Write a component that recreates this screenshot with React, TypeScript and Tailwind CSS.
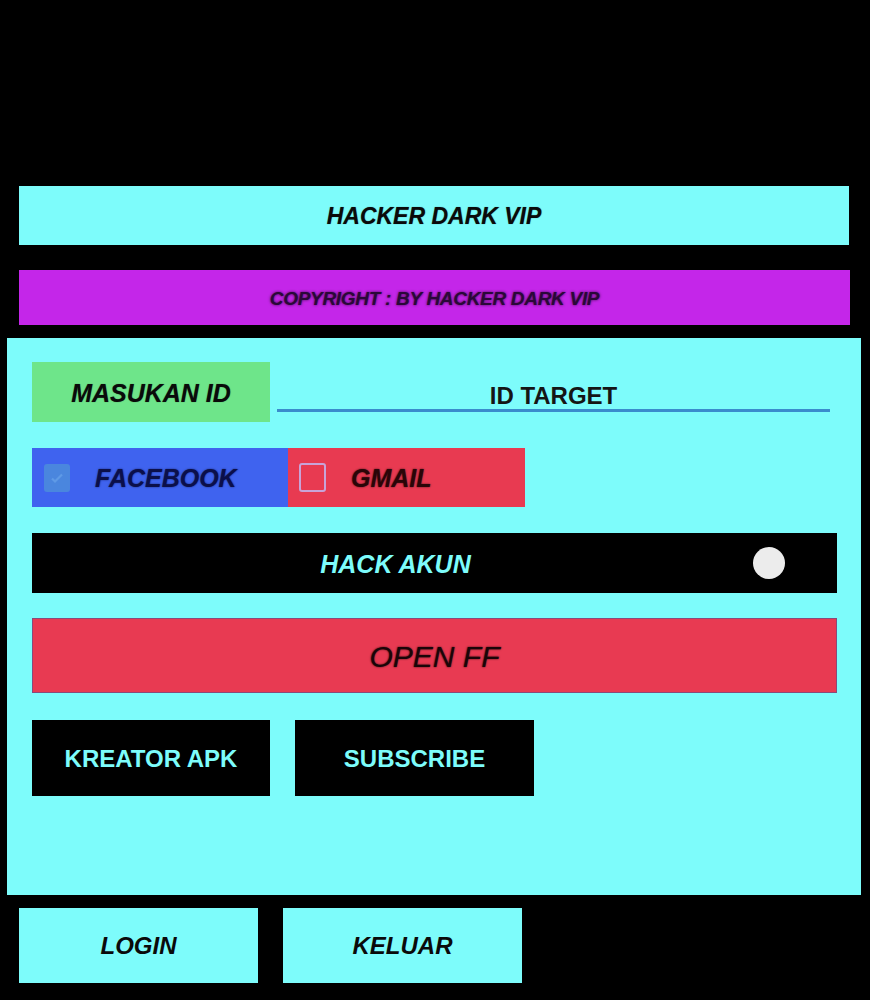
import React from "react";

const font = "font-['Liberation_Sans','Arial',sans-serif]";

export default function App() {
  return (
    <div className={`bg-black w-[870px] h-[1000px] pt-[186px] ${font}`}>
      <div className="ml-[19px] w-[830px] h-[59px] bg-[#7dfcfb] flex items-center justify-center pt-[2px]">
        <span className="text-[23px] font-bold italic text-[#0a0a0a] [text-shadow:0_0_1px_rgba(0,0,0,0.5)]">
          HACKER DARK VIP
        </span>
      </div>

      <div className="ml-[19px] mt-[25px] w-[831px] h-[55px] bg-[#c426e9] flex items-center justify-center pt-[3px]">
        <span className="text-[19px] font-bold italic tracking-[-0.3px] text-[#2a0838] [text-shadow:0_0_3px_rgba(0,0,0,0.7)]">
          COPYRIGHT : BY HACKER DARK VIP
        </span>
      </div>

      <div className="ml-[7px] mt-[13px] w-[854px] h-[557px] bg-[#7dfcfb] pl-[25px] pt-[24px]">
        <div className="flex items-start h-[60px]">
          <div className="w-[238px] h-[60px] bg-[#6ee58a] flex items-center justify-center pt-[3px]">
            <span className="text-[25px] font-bold italic text-[#0a0a0a] [text-shadow:0_0_1px_rgba(0,0,0,0.5)]">
              MASUKAN ID
            </span>
          </div>
          <div className="ml-[7px] w-[553px] h-[50px] border-b-[3px] border-[#3a8ccc] flex items-end justify-center pb-[0px]">
            <span className="text-[24px] font-bold text-[#151515] leading-[26px]">ID TARGET</span>
          </div>
        </div>

        <div className="mt-[26px] flex h-[59px]">
          <div className="w-[256px] h-[59px] bg-[#3f63ef] flex items-center">
            <div className="ml-[12px] w-[26px] h-[28px] rounded-[3px] bg-[#4a86de] flex items-center justify-center">
              <svg width="16" height="16" viewBox="0 0 16 16">
                <path d="M3 8.5l3 3 7-7" fill="none" stroke="#5f9ae6" strokeWidth="2.2" />
              </svg>
            </div>
            <span className="ml-[25px] pt-[3px] text-[25px] font-bold italic text-[#0b0f4a] [text-shadow:0_0_2px_rgba(0,0,30,0.6)]">
              FACEBOOK
            </span>
          </div>
          <div className="w-[237px] h-[59px] bg-[#e83a51] flex items-center">
            <div className="ml-[11px] w-[27px] h-[29px] rounded-[3px] border-[2px] border-[#c8a3d8]" />
            <span className="ml-[25px] pt-[3px] text-[25px] font-bold italic text-[#2a0508] [text-shadow:0_0_2px_rgba(0,0,0,0.7)]">
              GMAIL
            </span>
          </div>
        </div>

        <div className="mt-[26px] w-[805px] h-[60px] bg-black flex items-center">
          <div className="flex-1 flex justify-center pl-[6px] pt-[4px]">
            <span className="text-[25px] font-bold italic text-[#7dfcfb]">HACK AKUN</span>
          </div>
          <div className="w-[32px] h-[32px] rounded-full bg-[#ececec] mr-[52px]" />
        </div>

        <div className="mt-[25px] w-[805px] h-[75px] bg-[#e83a52] border border-[#8a4a7a] flex items-center justify-center pt-[2px]">
          <span className="text-[30px] italic text-[#1a0508] [text-shadow:0_0_2px_rgba(0,0,0,0.8)]">
            OPEN FF
          </span>
        </div>

        <div className="mt-[27px] flex gap-[25px]">
          <div className="w-[238px] h-[76px] bg-black flex items-center justify-center pt-[2px]">
            <span className="text-[24px] font-bold text-[#7dfcfb]">KREATOR APK</span>
          </div>
          <div className="w-[239px] h-[76px] bg-black flex items-center justify-center pt-[2px]">
            <span className="text-[24px] font-bold text-[#7dfcfb]">SUBSCRIBE</span>
          </div>
        </div>
      </div>

      <div className="ml-[19px] mt-[13px] flex gap-[25px]">
        <div className="w-[239px] h-[75px] bg-[#7dfcfb] flex items-center justify-center">
          <span className="text-[24px] font-bold italic text-[#0a0a0a]">LOGIN</span>
        </div>
        <div className="w-[239px] h-[75px] bg-[#7dfcfb] flex items-center justify-center">
          <span className="text-[24px] font-bold italic text-[#0a0a0a]">KELUAR</span>
        </div>
      </div>
    </div>
  );
}
